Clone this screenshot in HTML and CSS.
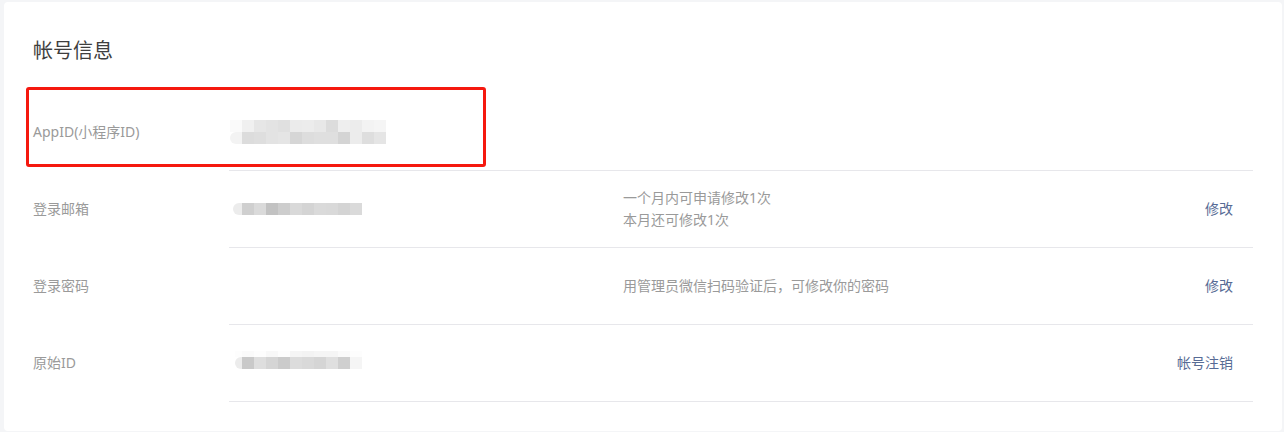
FILE: index.html
```html
<!DOCTYPE html>
<html lang="zh-CN">
<head>
<meta charset="utf-8">
<title>帐号信息</title>
<link rel="stylesheet" href="styles.css">
</head>
<body>
<div class="card">
  <h2 class="title">帐号信息</h2>
  <div class="mark"></div>
  <div class="rows">
    <div class="row">
      <div class="label">AppID(小程序ID)</div>
      <div class="main">
        <div class="value">
          <div class="mosaic m-appid">
            <i class="c fa"></i><i class="c f0"></i><i class="c e6"></i><i class="c e3"></i><i class="c e0"></i><i class="c eb"></i><i class="c ec"></i><i class="c e8"></i><i class="c dc"></i><i class="c ee"></i><i class="c ec"></i><i class="c f3"></i><i class="c f5"></i>
            <i class="c f3 rl"></i><i class="c dc"></i><i class="c de"></i><i class="c e3"></i><i class="c e5"></i><i class="c d6"></i><i class="c dd"></i><i class="c df"></i><i class="c df"></i><i class="c d4"></i><i class="c ec"></i><i class="c de"></i><i class="c e5"></i>
          </div>
        </div>
        <div class="desc"></div>
        <div class="action"></div>
      </div>
    </div>
    <div class="row">
      <div class="label">登录邮箱</div>
      <div class="main">
        <div class="value">
          <div class="mosaic m-mail">
            <i class="h ec rl"></i><i class="c cf"></i><i class="c da"></i><i class="c c2"></i><i class="c cd"></i><i class="c d9"></i><i class="c d4"></i><i class="c da"></i><i class="c d9"></i><i class="c d4"></i><i class="c da"></i>
          </div>
        </div>
        <div class="desc">一个月内可申请修改1次<br>本月还可修改1次</div>
        <div class="action"><a class="link">修改</a></div>
      </div>
    </div>
    <div class="row">
      <div class="label">登录密码</div>
      <div class="main">
        <div class="value"></div>
        <div class="desc">用管理员微信扫码验证后，可修改你的密码</div>
        <div class="action"><a class="link">修改</a></div>
      </div>
    </div>
    <div class="row">
      <div class="label">原始ID</div>
      <div class="main">
        <div class="value">
          <div class="mosaic m-raw">
            <i class="h fe"></i><i class="c fa"></i><i class="c fe"></i><i class="c f8"></i><i class="c fe"></i><i class="c f5"></i><i class="c f3"></i><i class="c f5"></i><i class="c f5"></i><i class="c fa"></i><i class="c fe"></i>
            <i class="h ec rl"></i><i class="c c9"></i><i class="c de"></i><i class="c d5"></i><i class="c cb"></i><i class="c dc"></i><i class="c d9"></i><i class="c d5"></i><i class="c df"></i><i class="c cf"></i><i class="c f5"></i>
          </div>
        </div>
        <div class="desc"></div>
        <div class="action"><a class="link">帐号注销</a></div>
      </div>
    </div>
  </div>
</div>
</body>
</html>
```

FILE: styles.css
```css
html, body {
  margin: 0;
  padding: 0;
}
body {
  background: #f4f5f7;
  font-family: "Noto Sans", "Noto Sans CJK SC", sans-serif;
  font-size: 14px;
  color: #353535;
  height: 432px;
  overflow: hidden;
}
.card {
  position: relative;
  margin: 2px 2px 0 4px;
  background: #fff;
  border-radius: 4px;
  padding: 34px 29px 29px 29px;
}
.title {
  margin: 0;
  font-weight: normal;
  font-size: 20px;
  line-height: 28px;
  color: #3e3e3e;
  font-family: "Noto Sans CJK SC", sans-serif;
}
.mark {
  position: absolute;
  left: 22px;
  top: 85px;
  width: 454px;
  height: 74px;
  border: 3px solid #f5180f;
  border-radius: 3px;
}
.rows {
  margin-top: 30px;
}
.row {
  display: flex;
  height: 77px;
}
.label {
  width: 196px;
  flex: none;
  display: flex;
  align-items: center;
  color: #9a9a9a;
  padding-bottom: 4px;
  box-sizing: border-box;
}
.main {
  flex: 1;
  display: flex;
  align-items: center;
  border-bottom: 1px solid #e7e7eb;
}
.value {
  width: 394px;
  flex: none;
  display: flex;
  align-items: center;
}
.desc {
  flex: 1;
  color: #9a9a9a;
  line-height: 22px;
}
.action {
  padding-right: 20px;
  padding-bottom: 2px;
}
.link {
  color: #576b95;
  text-decoration: none;
  cursor: pointer;
}
.mosaic {
  display: grid;
  grid-auto-rows: 12px;
}
.m-appid {
  grid-template-columns: repeat(13, 12px);
  margin-left: 1px;
  margin-top: 0;
}
.m-mail {
  grid-template-columns: 9px repeat(10, 12px);
  margin-left: 4px;
  margin-top: -1px;
}
.m-raw {
  grid-template-columns: 7px repeat(10, 12px);
  grid-template-rows: 6px 12px;
  margin-left: 6px;
  margin-top: -6px;
}
.c, .h { display: block; }
.rl { border-radius: 6px 0 0 6px; }
.fe { background: #fdfdfd; }
.fa { background: #fafafa; }
.f8 { background: #f8f8f8; }
.f5 { background: #f5f5f5; }
.f3 { background: #f3f3f3; }
.f0 { background: #f0f0f0; }
.ee { background: #eeeeee; }
.ec { background: #ececec; }
.eb { background: #ebebeb; }
.e8 { background: #e8e8e8; }
.e6 { background: #e6e6e6; }
.e5 { background: #e5e5e5; }
.e3 { background: #e3e3e3; }
.e0 { background: #e0e0e0; }
.df { background: #dfdfdf; }
.de { background: #dedede; }
.dd { background: #dddddd; }
.dc { background: #dcdcdc; }
.da { background: #dadada; }
.d9 { background: #d9d9d9; }
.d6 { background: #d6d6d6; }
.d5 { background: #d5d5d5; }
.d4 { background: #d4d4d4; }
.cf { background: #cfcfcf; }
.cd { background: #cdcdcd; }
.cb { background: #cbcbcb; }
.c9 { background: #c9c9c9; }
.c2 { background: #c2c2c2; }
```
